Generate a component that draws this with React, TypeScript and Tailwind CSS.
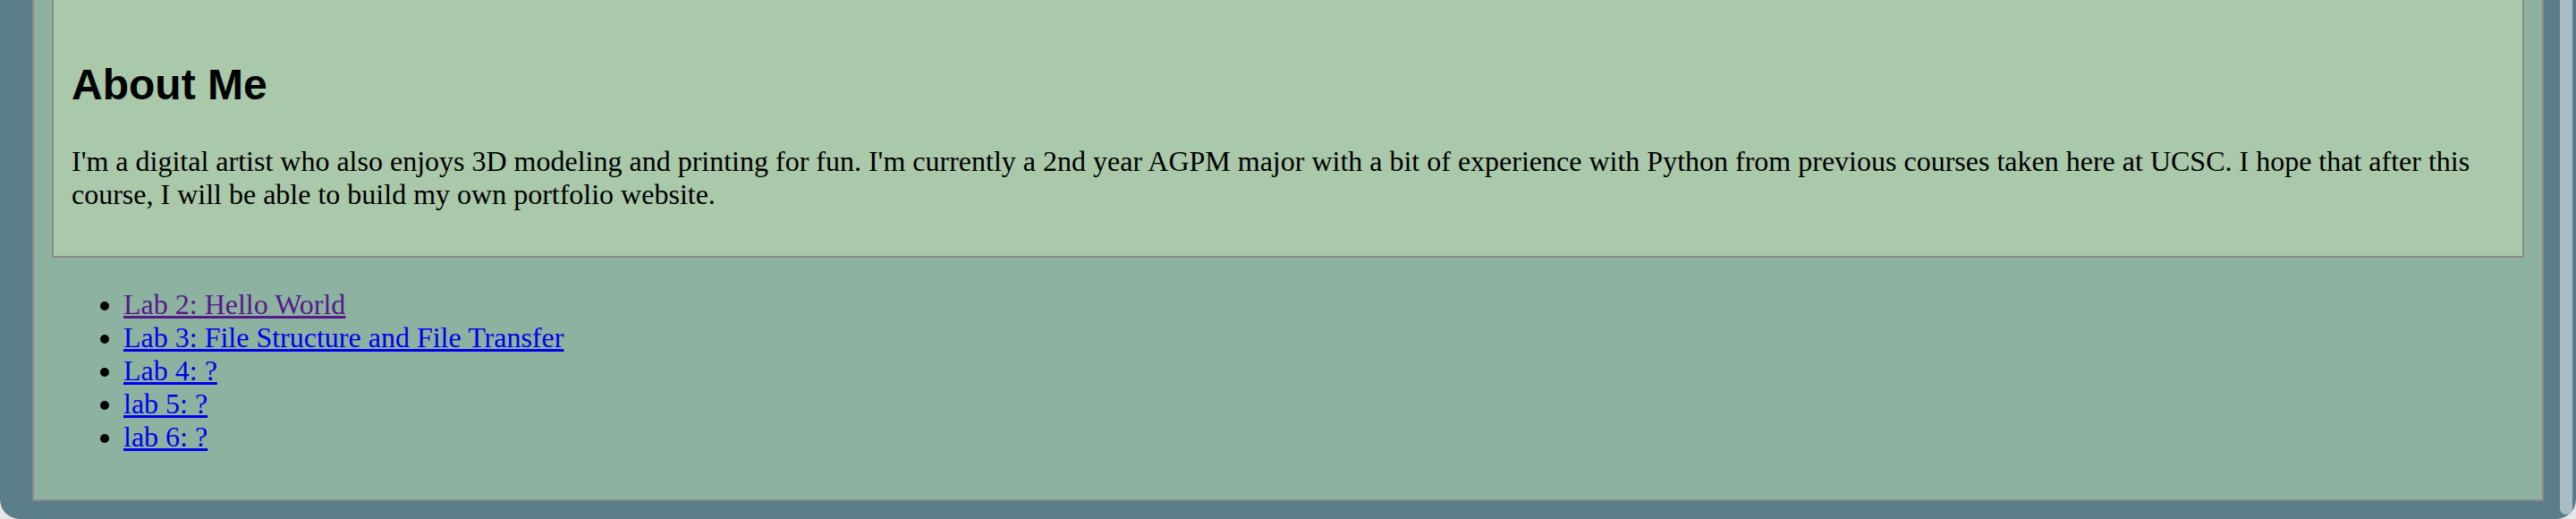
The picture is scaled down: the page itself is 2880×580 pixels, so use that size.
import React from "react";

const links = [
  { label: "Lab 2: Hello World", visited: true },
  { label: "Lab 3: File Structure and File Transfer", visited: false },
  { label: "Lab 4: ?", visited: false },
  { label: "lab 5: ?", visited: false },
  { label: "lab 6: ?", visited: false },
];

export default function App() {
  return (
    <div className="h-[580px] w-[2880px] overflow-hidden bg-[#e6e6e6]">
      <div className="relative h-full overflow-hidden rounded-b-[22px] bg-[#5b7c89] px-[36px] pb-[20px]">
        <div className="h-full border-2 border-t-0 border-[#8a8a8a] bg-[#8db2a0] px-[20px]">
          <section className="border-2 border-t-0 border-[#8a8a8a] bg-[#aac8aa] px-[20px] pt-[27px] pb-[18px]">
            <h2 className="mt-[40px] mb-[40px] text-[48px] font-bold leading-[normal] text-black font-['Liberation_Sans',Arial,sans-serif]">
              About Me
            </h2>
            <p className="mb-[32px] text-[32px] leading-[normal] text-black font-['Liberation_Serif','Times_New_Roman',serif]">
              I'm a digital artist who also enjoys 3D modeling and printing for fun. I'm currently a 2nd year AGPM major with a bit of experience with Python from previous courses taken here at UCSC. I hope that after this course, I will be able to build my own portfolio website.
            </p>
          </section>
          <ul className="mt-[34px] list-disc pl-[80px] text-[32px] leading-[normal] text-black font-['Liberation_Serif','Times_New_Roman',serif]">
            {links.map((l) => (
              <li key={l.label}>
                <a
                  href="#"
                  className={
                    l.visited
                      ? "text-[#551a8b] underline"
                      : "text-[#0000ee] underline"
                  }
                >
                  {l.label}
                </a>
              </li>
            ))}
          </ul>
        </div>
        <div className="absolute right-[4px] top-[-20px] bottom-[5px] w-[14px] rounded-[7px] bg-[#aabdc7]" />
      </div>
    </div>
  );
}
